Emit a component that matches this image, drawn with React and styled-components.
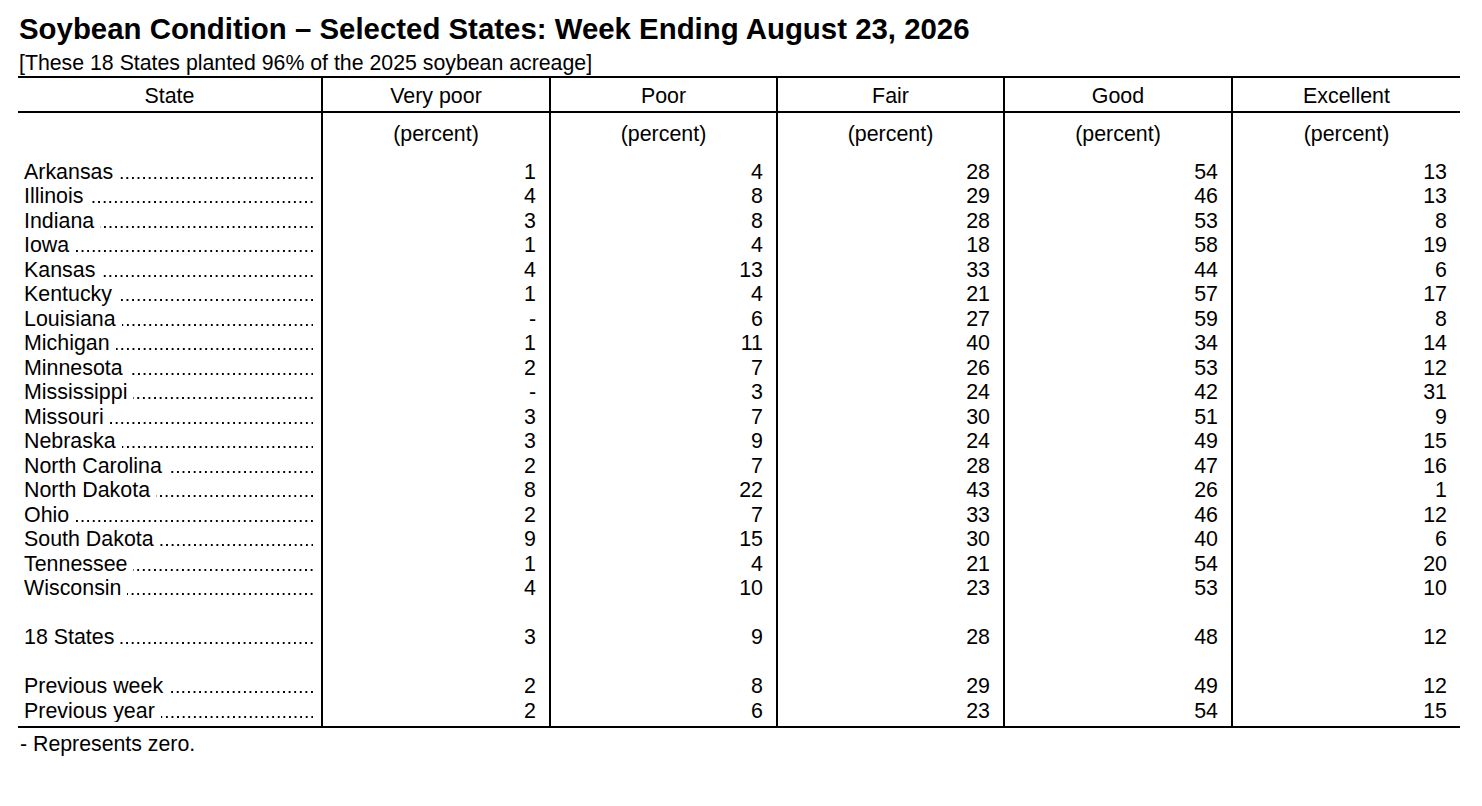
import React from 'react'
import styled, { createGlobalStyle } from 'styled-components'

const GlobalStyle = createGlobalStyle`
  html, body {
    margin: 0;
    padding: 0;
    background: #fff;
  }
  body {
    font-family: "Liberation Sans", Arial, sans-serif;
    color: #000;
  }
`;

const COLS = '303px 228px 227px 227px 228px 229px';

const Page = styled.div`
  padding: 13px 0 0 18px;
  width: 1442px;
`;

const Title = styled.h1`
  margin: 0;
  padding-left: 1px;
  font-size: 29.4px;
  line-height: 32px;
  font-weight: bold;
`;

const Subtitle = styled.div`
  margin-top: 6px;
  padding-left: 1px;
  font-size: 21.3px;
  line-height: 24px;
  height: 25px;
`;

const Table = styled.div`
  border-top: 2px solid #000;
  border-bottom: 2px solid #000;
`;

const Row = styled.div`
  display: grid;
  grid-template-columns: ${COLS};
  height: ${p => p.$h || 24.5}px;
  font-size: 21.4px;
  line-height: 24.5px;
  ${p => p.$rule && 'border-bottom: 2px solid #000;'}
`;

const Cell = styled.div`
  border-left: ${p => (p.$first ? 'none' : '2px solid #000')};
  white-space: nowrap;
  overflow: hidden;
`;

const HeadCell = styled(Cell)`
  display: flex;
  align-items: center;
  justify-content: center;
  padding-top: 3px;
`;

const UnitCell = styled(Cell)`
  text-align: center;
  padding-top: 9px;
`;

const NumCell = styled(Cell)`
  text-align: right;
  padding: 1px 13px 0 0;
`;

const StateCell = styled(Cell)`
  display: flex;
  padding: 1px 8px 0 6px;
`;

/* dot leader, anchored on the right like the tab leaders of the source */
const Leader = styled.span`
  flex: 1;
  margin-left: 6px;
  background-image: linear-gradient(90deg, transparent 3.6px, #000 3.6px);
  background-size: 5.6px 2px;
  background-repeat: repeat-x;
  background-position: right 0 top 17px;
`;

const Footnote = styled.div`
  padding: 4px 0 0 2px;
  font-size: 21.3px;
  line-height: 24px;
`;

const HEADERS = ['State', 'Very poor', 'Poor', 'Fair', 'Good', 'Excellent'];

const ROWS = [
  ['Arkansas', '1', '4', '28', '54', '13'],
  ['Illinois', '4', '8', '29', '46', '13'],
  ['Indiana', '3', '8', '28', '53', '8'],
  ['Iowa', '1', '4', '18', '58', '19'],
  ['Kansas', '4', '13', '33', '44', '6'],
  ['Kentucky', '1', '4', '21', '57', '17'],
  ['Louisiana', '-', '6', '27', '59', '8'],
  ['Michigan', '1', '11', '40', '34', '14'],
  ['Minnesota', '2', '7', '26', '53', '12'],
  ['Mississippi', '-', '3', '24', '42', '31'],
  ['Missouri', '3', '7', '30', '51', '9'],
  ['Nebraska', '3', '9', '24', '49', '15'],
  ['North Carolina', '2', '7', '28', '47', '16'],
  ['North Dakota', '8', '22', '43', '26', '1'],
  ['Ohio', '2', '7', '33', '46', '12'],
  ['South Dakota', '9', '15', '30', '40', '6'],
  ['Tennessee', '1', '4', '21', '54', '20'],
  ['Wisconsin', '4', '10', '23', '53', '10'],
  null,
  ['18 States', '3', '9', '28', '48', '12'],
  null,
  ['Previous week', '2', '8', '29', '49', '12'],
  ['Previous year', '2', '6', '23', '54', '15'],
];

function EmptyRow({ h }) {
  return (
    <Row $h={h}>
      {HEADERS.map((c, i) => <Cell key={c} $first={i === 0} />)}
    </Row>
  );
}

function DataRow({ data }) {
  if (!data) return <EmptyRow />;
  const [name, ...vals] = data;
  return (
    <Row>
      <StateCell $first>
        <span>{name}</span>
        <Leader />
      </StateCell>
      {vals.map((v, i) => <NumCell key={i}>{v}</NumCell>)}
    </Row>
  );
}

export default function App() {
  return (
    <>
      <GlobalStyle />
      <Page>
        <Title>Soybean Condition – Selected States: Week Ending August 23, 2026</Title>
        <Subtitle>[These 18 States planted 96% of the 2025 soybean acreage]</Subtitle>
        <Table>
          <Row $h={33} $rule>
            {HEADERS.map((h, i) => <HeadCell key={h} $first={i === 0}>{h}</HeadCell>)}
          </Row>
          <Row $h={45.75}>
            {HEADERS.map((h, i) => (
              <UnitCell key={h} $first={i === 0}>{i === 0 ? '' : '(percent)'}</UnitCell>
            ))}
          </Row>
          {ROWS.map((r, i) => <DataRow key={i} data={r} />)}
          <EmptyRow h={3.75} />
        </Table>
        <Footnote>- Represents zero.</Footnote>
      </Page>
    </>
  );
}
